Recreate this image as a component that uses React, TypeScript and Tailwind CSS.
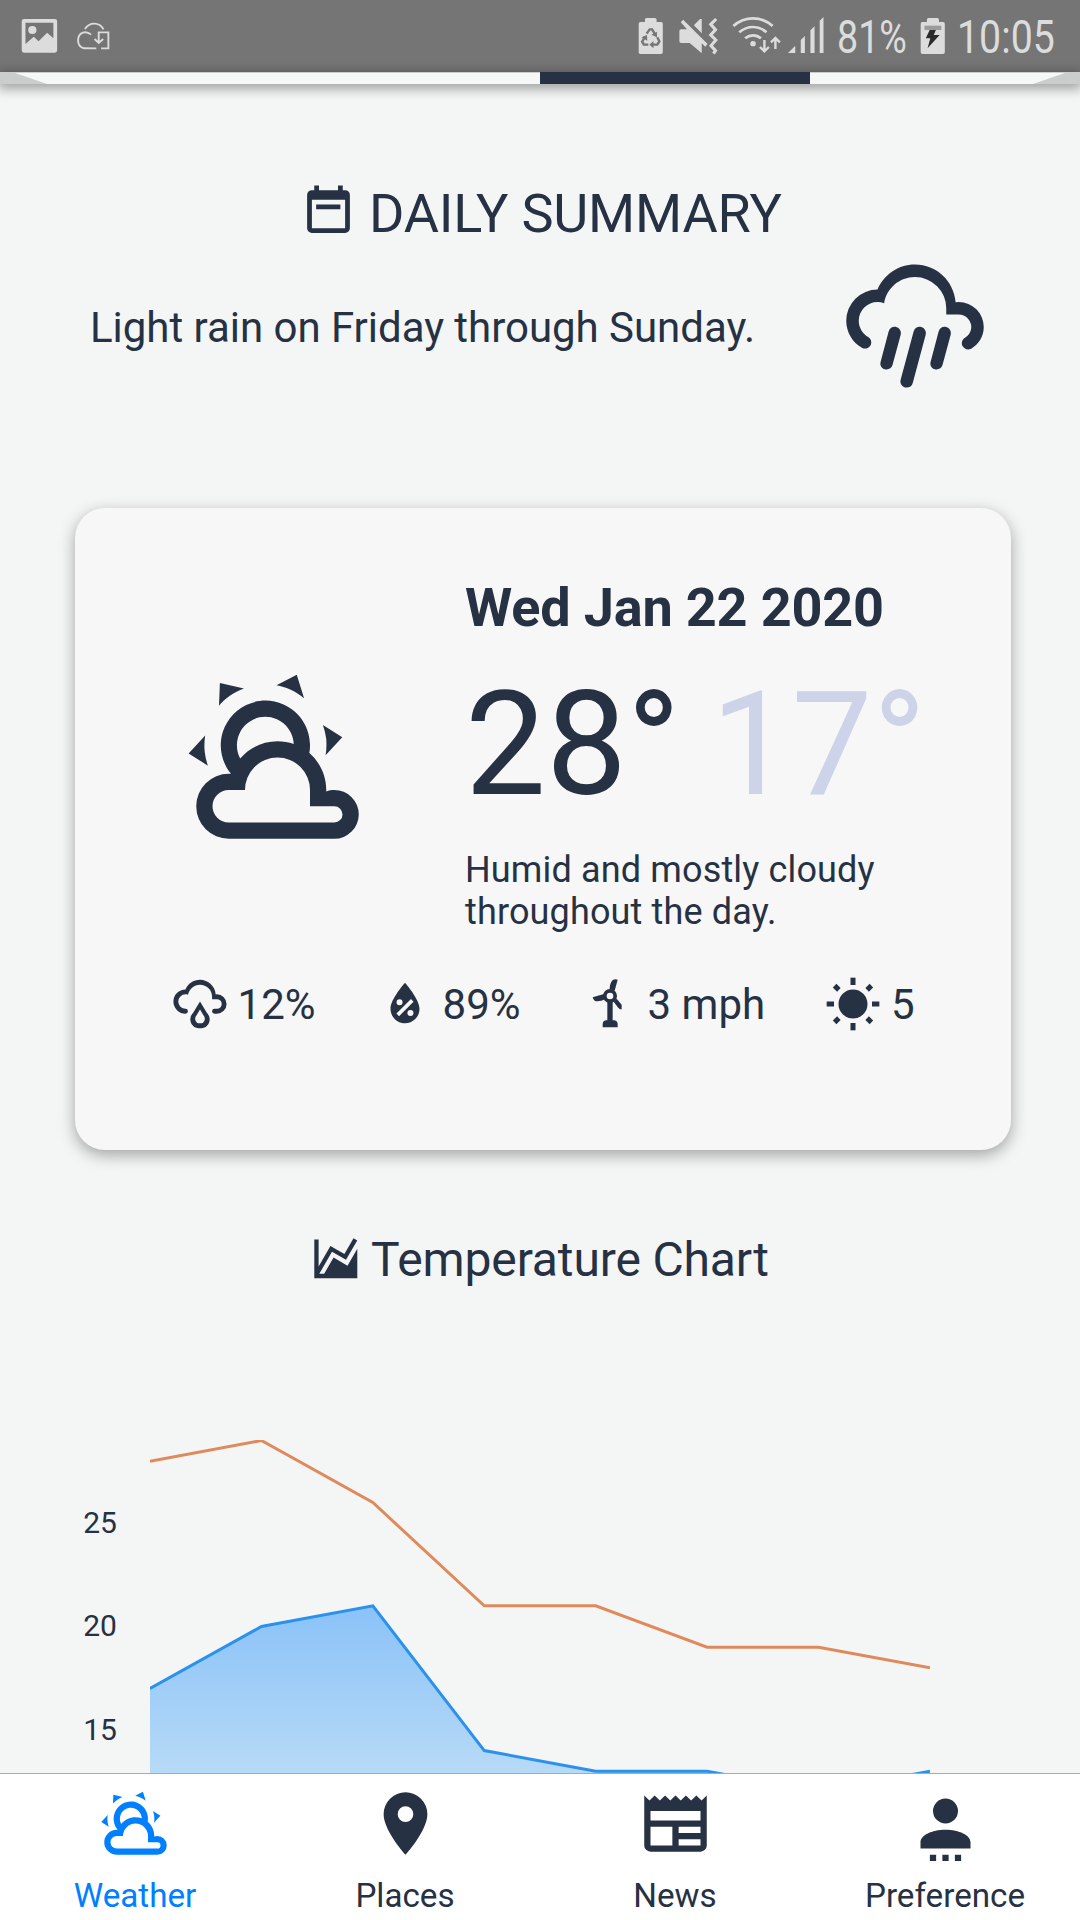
import React from "react";

type IconProps = { d: string; size: string };

function Icon({ d, size }: IconProps) {
  return (
    <svg viewBox="0 0 24 24" className={`${size} shrink-0`} fill="currentColor">
      <path fillRule="evenodd" d={d} />
    </svg>
  );
}

const PARTLY_CLOUDY =
  "M12.74,5.47C15.1,6.5 16.35,9.03 15.92,11.46C17.19,12.56 18,14.19 18,16V16.17C18.31,16.06 18.65,16 19,16A3,3 0 0,1 22,19A3,3 0 0,1 19,22H6A4,4 0 0,1 2,18A4,4 0 0,1 6,14H6.27C5,12.45 4.6,10.24 5.5,8.26C6.72,5.5 9.97,4.24 12.74,5.47M11.93,7.3C10.16,6.5 8.09,7.31 7.31,9.07C6.85,10.09 6.93,11.22 7.41,12.13C8.5,10.83 10.16,10 12,10C12.7,10 13.38,10.12 14,10.34C13.94,9.06 13.18,7.86 11.93,7.3M13.55,3.64C13,3.4 12.45,3.23 11.88,3.12L14.37,1.82L15.27,4.71C14.76,4.29 14.19,3.93 13.55,3.64M6.09,4.44C5.6,4.79 5.17,5.19 4.8,5.63L4.91,2.82L7.87,3.5C7.25,3.71 6.65,4.03 6.09,4.44M18,9.71C17.91,9.12 17.78,8.55 17.59,8L19.97,9.5L17.92,11.73C18.03,11.08 18.05,10.4 18,9.71M3.04,11.3C3.11,11.9 3.24,12.47 3.43,13L1.06,11.5L3.1,9.28C3,9.93 2.97,10.61 3.04,11.3M19,18H16V16A4,4 0 0,0 12,12A4,4 0 0,0 8,16H6A2,2 0 0,0 4,18A2,2 0 0,0 6,20H19A1,1 0 0,0 20,19A1,1 0 0,0 19,18Z";
const POURING =
  "M9,12C9.53,12.14 9.85,12.69 9.71,13.22L8.41,18.05C8.27,18.59 7.72,18.9 7.19,18.76C6.65,18.62 6.34,18.07 6.5,17.54L7.78,12.71C7.92,12.17 8.47,11.86 9,12M13,12C13.53,12.14 13.85,12.69 13.71,13.22L11.64,20.95C11.5,21.5 10.95,21.8 10.41,21.66C9.88,21.5 9.56,20.97 9.7,20.43L11.78,12.71C11.92,12.17 12.47,11.86 13,12M17,12C17.53,12.14 17.85,12.69 17.71,13.22L16.41,18.05C16.27,18.59 15.72,18.9 15.19,18.76C14.65,18.62 14.34,18.07 14.5,17.54L15.78,12.71C15.92,12.17 16.47,11.86 17,12M17,10V9A5,5 0 0,0 12,4C9.5,4 7.45,5.82 7.06,8.19C6.73,8.07 6.37,8 6,8A3,3 0 0,0 3,11C3,12.11 3.6,13.08 4.5,13.6V13.59C5,13.87 5.14,14.5 4.87,14.96C4.59,15.43 4,15.6 3.5,15.32V15.33C2,14.47 1,12.85 1,11A5,5 0 0,1 6,6C7,3.65 9.3,2 12,2C15.43,2 18.24,4.66 18.5,8.03L19,8A4,4 0 0,1 23,12C23,13.5 22.2,14.77 21,15.46V15.46C20.5,15.73 19.91,15.57 19.63,15.09C19.36,14.61 19.5,14 20,13.72V13.72C20.6,13.37 21,12.73 21,12A2,2 0 0,0 19,10H17Z";
const RAINY =
  "M6,14A1,1 0 0,1 7,15A1,1 0 0,1 6,16A5,5 0 0,1 1,11A5,5 0 0,1 6,6C7,3.65 9.3,2 12,2C15.43,2 18.24,4.66 18.5,8.03L19,8A4,4 0 0,1 23,12A4,4 0 0,1 19,16H18A1,1 0 0,1 17,15A1,1 0 0,1 18,14H19A2,2 0 0,0 21,12A2,2 0 0,0 19,10H17V9A5,5 0 0,0 12,4C9.5,4 7.45,5.82 7.06,8.19C6.73,8.07 6.37,8 6,8A3,3 0 0,0 3,11A3,3 0 0,0 6,14M14.83,15.67C16.39,17.23 16.39,19.5 14.83,21.08C14.05,21.86 13,22 12,22C11,22 9.95,21.86 9.17,21.08C7.61,19.5 7.61,17.23 9.17,15.67L12,11L14.83,15.67M13.41,16.69L12,14.25L10.59,16.69C9.8,17.5 9.8,18.7 10.59,19.5C11,19.93 11.5,20 12,20C12.5,20 13,19.93 13.41,19.5C14.2,18.7 14.2,17.5 13.41,16.69Z";
const HUMIDITY =
  "M12,3.25C12,3.25 6,10 6,14C6,17.32 8.69,20 12,20A6,6 0 0,0 18,14C18,10 12,3.25 12,3.25M14.47,9.97L15.53,11.03L9.53,17.03L8.47,15.97M9.75,10A1.25,1.25 0 0,1 11,11.25A1.25,1.25 0 0,1 9.75,12.5A1.25,1.25 0 0,1 8.5,11.25A1.25,1.25 0 0,1 9.75,10M14.25,14.5A1.25,1.25 0 0,1 15.5,15.75A1.25,1.25 0 0,1 14.25,17A1.25,1.25 0 0,1 13,15.75A1.25,1.25 0 0,1 14.25,14.5Z";
const CALENDAR =
  "M6,1H8V3H16V1H18V3H19A2,2 0 0,1 21,5V19A2,2 0 0,1 19,21H5A2,2 0 0,1 3,19V5A2,2 0 0,1 5,3H6ZM5,7V19H19V7ZM6.8,9H17V11H6.8Z";
const AREA_CHART =
  "M17.45,15.18L22,7.31V21H2V3H4V15.54L9.5,6L16,9.78L20.24,2.45L21.97,3.45L16.74,12.5L10.23,8.75L4.31,19H6.57L10.96,11.44L17.45,15.18Z";
const MARKER =
  "M12,11.5A2.5,2.5 0 0,1 9.5,9A2.5,2.5 0 0,1 12,6.5A2.5,2.5 0 0,1 14.5,9A2.5,2.5 0 0,1 12,11.5M12,2A7,7 0 0,0 5,9C5,14.25 12,22 12,22C12,22 19,14.25 19,9A7,7 0 0,0 12,2Z";
const NEWSPAPER =
  "M20,11H4V8H20M20,15H13V13H20M20,19H13V17H20M11,19H4V13H11M20.33,4.67L18.67,3L17,4.67L15.33,3L13.67,4.67L12,3L10.33,4.67L8.67,3L7,4.67L5.33,3L3.67,4.67L2,3V19A2,2 0 0,0 4,21H20A2,2 0 0,0 22,19V3L20.33,4.67Z";
const ACCOUNT =
  "M12,4A4,4 0 0,0 8,8A4,4 0 0,0 12,12A4,4 0 0,0 16,8A4,4 0 0,0 12,4M12,14C7.58,14 4,15.79 4,18V20H20V18C20,15.79 16.42,14 12,14M7,22V24H9V22H7M11,22V24H13V22H11M15,22V24H17V22H15Z";

function WindTurbine() {
  return (
    <svg viewBox="61 44 174 174" className="size-[58px] shrink-0" fill="currentColor">
      <path fillRule="evenodd" d="M148 86a21 21 0 1 0 0 42a21 21 0 1 0 0-42ZM148 97a10 10 0 1 1 0 20a10 10 0 1 1 0-20Z" />
      <path d="M147 87C147 74 151 62 158 58Q165 56 171 58L162 91ZM130 101L96 111Q97 118 103 122C111 125 124 121 133 117ZM168 115L183 133V147L178 147C169 139 164 130 159 124ZM140 125H156V180H161Q171 182 171 192V201H126V192Q126 182 136 180H140Z" />
    </svg>
  );
}

function Sun() {
  return (
    <svg viewBox="793 40 174 174" className="size-[58px] shrink-0" fill="currentColor">
      <circle cx="880" cy="127" r="43.5" />
      {[0, 90, 180, 270].map((a) => (
        <rect key={a} x="872.5" y="48" width="15" height="22" transform={`rotate(${a} 880 127)`} />
      ))}
      {[45, 135, 225, 315].map((a) => (
        <rect key={a} x="872.5" y="49" width="15" height="18" transform={`rotate(${a} 880 127)`} />
      ))}
    </svg>
  );
}

function StatusBar() {
  return (
    <header className="flex h-[72px] shrink-0 items-start bg-[#757575] text-[#dcdcdc]">
      <svg preserveAspectRatio="none" viewBox="60 0 107 216" className="ml-[20.7px] h-[72px] w-[36.85px]" fill="currentColor">
        <path fillRule="evenodd" d="M69 57H158Q165 57 165 64V151Q165 158 158 158H69Q62 158 62 151V64Q62 57 69 57ZM73 68V132L97 110L111 124L136 98L154 115V68ZM93 78a12 12 0 1 1 0 24a12 12 0 1 1 0-24Z" />
      </svg>
      <svg preserveAspectRatio="none" viewBox="220 0 100 216" className="ml-[18.2px] h-[72px] w-[34.44px]" fill="none" stroke="currentColor" strokeWidth="5.5">
        <path d="M246 87Q256 71 273 71Q291 71 300 88M264 104Q252 94 240 98Q226 104 226 121Q226 138 240 144Q245 145 279 145M293 145H314V97H286V128M274 117L286 129L299 117" />
      </svg>
      <div className="grow" />
      <svg preserveAspectRatio="none" viewBox="285 0 75 216" className="h-[72px] w-[25.83px]">
        <path fill="currentColor" d="M305 59Q305 54 310 54H334Q339 54 339 59V66H352Q357 66 357 71V157Q357 162 352 162H292Q287 162 287 157V71Q287 66 292 66H305Z" />
        <g fill="none" stroke="#757575" strokeWidth="7">
          <path d="M310 101L319 88H326L334 102M341 112L347 124L341 134H323M315 134H302L297 125L305 111" />
          <path fill="#757575" stroke="none" d="M324 104L340 95V112ZM330 123V145L318 134ZM295 112L311 105L312 122Z" />
        </g>
      </svg>
      <svg preserveAspectRatio="none" viewBox="400 0 118 216" className="ml-[13.8px] h-[72px] w-[40.63px]" fill="currentColor">
        <path d="M404 93Q404 88 409 88H426L408 67L415 59L486 132L479 140L469 130V160L434 129H409Q404 129 404 124ZM446 76L464 57H469V100Z" />
        <path fill="none" stroke="currentColor" strokeWidth="9" d="M511 57L495 73L509 89L495 105L510 120L496 137L509 152L503 161" />
      </svg>
      <svg preserveAspectRatio="none" viewBox="556 0 146 216" className="ml-[13.1px] h-[72px] w-[50.28px]" fill="none" stroke="currentColor" strokeWidth="8">
        <path d="M563 78Q588 55 620 55Q652 55 677 78M580 97Q598 81 620 81Q642 81 659 97M597 115Q608 106 620 106Q633 106 643 115" />
        <circle cx="620" cy="131" r="8" fill="currentColor" stroke="none" />
        <path strokeWidth="7" d="M653 120V153M640 141L653 154L666 141M685 147V114M672 127L685 114L698 127" />
      </svg>
      <svg preserveAspectRatio="none" viewBox="716 0 108 216" className="ml-[4.8px] h-[72px] w-[37.19px]" fill="currentColor">
        <path d="M719 159L740 137V159ZM756 159V120L768 108V159ZM784 159V91L796 79V159ZM811 159V62L822 51V159Z" />
      </svg>
      <div className="ml-[12.8px] h-[72px] w-[70px] text-[46.5px] leading-[75px]">
        <span className="inline-block origin-left scale-x-[0.81] whitespace-nowrap">81%</span>
      </div>
      <svg preserveAspectRatio="none" viewBox="1104 0 75 216" className="ml-[13.7px] h-[72px] w-[25.83px]">
        <path fill="currentColor" d="M1124 59Q1124 54 1129 54H1154Q1159 54 1159 59V66H1171Q1176 66 1176 71V157Q1176 162 1171 162H1111Q1106 162 1106 157V71Q1106 66 1111 66H1124Z" />
        <path fill="#9b9b9b" d="M1117 77H1166V90H1117Z" />
        <path fill="#2b2b2b" d="M1132 90H1150L1144 105H1161L1126 145L1134 115H1121Z" />
      </svg>
      <div className="ml-[10.9px] mr-[23.1px] h-[72px] w-[100px] text-[46.5px] leading-[75px]">
        <span className="inline-block origin-left scale-x-[0.845] whitespace-nowrap">10:05</span>
      </div>
    </header>
  );
}

function TabStrip() {
  return (
    <div className="relative z-10 flex h-3 shrink-0 border-t border-[#cccccc] bg-[#f5f8f7] shadow-[0_3px_12px_2px_rgba(0,0,0,0.35)]">
      <svg viewBox="0 0 47 11" className="h-[11px] w-[47px]">
        <path fill="#cbcdcc" d="M0 0H15L47 11H0Z" />
      </svg>
      <div className="w-[493px]" />
      <div className="-mt-px h-3 w-[270px] bg-[#263143]" />
      <div className="grow" />
      <svg viewBox="0 0 47 11" className="h-[11px] w-[47px]">
        <path fill="#cbcdcc" d="M47 0H32L0 11H47Z" />
      </svg>
    </div>
  );
}

function DayCard() {
  return (
    <section className="ml-[75px] mt-[107px] h-[642px] w-[936px] shrink-0 rounded-[30px] bg-[#f7f7f7] shadow-[0_5px_16px_rgba(0,0,0,0.34)]">
      <div className="flex h-[430px]">
        <div className="w-[390px] pl-[104.5px] pt-[152.3px]">
          <Icon d={PARTLY_CLOUDY} size="size-[195px]" />
        </div>
        <div className="pt-[68px]">
          <h2 className="text-[54px] font-bold leading-[64px] tracking-[-0.17px]">Wed Jan 22 2020</h2>
          <div className="mt-[21px] whitespace-pre text-[144px] leading-[168px]">
            28°<span className="ml-[30px] text-[#cdd3e8]">17°</span>
          </div>
          <p className="mt-[20px] w-[440px] text-[36px] leading-[42px] tracking-[0.15px]">Humid and mostly cloudy throughout the day.</p>
        </div>
      </div>
      <div className="mt-[36.7px] flex h-[58px] pl-[95.6px] text-[42px] leading-[59px]">
        <div className="flex w-[205px] gap-[9px]">
          <Icon d={RAINY} size="size-[58px]" />
          <span>12%</span>
        </div>
        <div className="flex w-[205px] gap-[9px]">
          <Icon d={HUMIDITY} size="size-[58px]" />
          <span>89%</span>
        </div>
        <div className="flex w-[243.5px] gap-[9px]">
          <WindTurbine />
          <span>3 mph</span>
        </div>
        <div className="flex gap-[9px]">
          <Sun />
          <span>5</span>
        </div>
      </div>
    </section>
  );
}

const HIGHS = [28, 29, 26, 21, 21, 19, 19, 18];
const LOWS = [17, 20, 21, 14, 13, 13, 12, 13];

function points(values: number[]) {
  return values.map((v, i) => `${(i * 780) / 7},${0.5 + (29 - v) * 20.67}`).join(" ");
}

function TemperatureChart() {
  return (
    <div className="mt-[155px] flex">
      <div className="flex w-[150px] flex-col pl-[50px] pt-[31px] text-center text-[30px]">
        {[25, 20, 15].map((t) => (
          <div key={t} className="h-[103.3px] leading-[103.3px]">{t}</div>
        ))}
      </div>
      <svg viewBox="0 0 780 400" className="h-[400px] w-[780px]" strokeWidth="3">
        <defs>
          <linearGradient id="lows" gradientUnits="userSpaceOnUse" x1="0" y1="165" x2="0" y2="400">
            <stop offset="0" stopColor="#8ac2f8" />
            <stop offset="1" stopColor="#c9e3f6" />
          </linearGradient>
        </defs>
        <polygon fill="url(#lows)" points={`0,400 ${points(LOWS)} 780,400`} />
        <polyline fill="none" stroke="#2a91ed" points={points(LOWS)} />
        <polyline fill="none" stroke="#e08a5c" points={points(HIGHS)} />
      </svg>
    </div>
  );
}

const TABS = [
  { label: "Weather", d: PARTLY_CLOUDY, color: "text-[#0080ff]" },
  { label: "Places", d: MARKER, color: "text-[#263143]" },
  { label: "News", d: NEWSPAPER, color: "text-[#263143]" },
  { label: "Preference", d: ACCOUNT, color: "text-[#263143]" },
];

export default function App() {
  return (
    <div className="flex h-[1920px] w-[1080px] flex-col overflow-hidden bg-[#f4f6f6] font-['Roboto',sans-serif] text-[#263143]">
      <StatusBar />
      <TabStrip />
      <main className="flex min-h-0 grow flex-col overflow-hidden">
        <div className="ml-[300px] mt-[99px] flex h-[61px] shrink-0 gap-[12px]">
          <Icon d={CALENDAR} size="size-[57px]" />
          <h1 className="whitespace-nowrap text-[54px] leading-[61px] tracking-[-0.17px]">DAILY SUMMARY</h1>
        </div>
        <div className="ml-[90px] mt-[8px] flex h-[149px] w-[900px] shrink-0 justify-between">
          <p className="whitespace-nowrap text-[42px] leading-[151px] tracking-[-0.03px]">Light rain on Friday through Sunday.</p>
          <Icon d={POURING} size="size-[150px]" />
        </div>
        <DayCard />
        <div className="ml-[310px] mt-[83px] flex h-[52px] shrink-0 gap-[9.5px]">
          <Icon d={AREA_CHART} size="size-[51.6px]" />
          <h2 className="whitespace-nowrap text-[48px] leading-[54px] tracking-[-0.14px]">Temperature Chart</h2>
        </div>
        <TemperatureChart />
      </main>
      <nav className="grid h-[147px] shrink-0 grid-cols-4 border-t border-[#a9abad] bg-white">
        {TABS.map((tab) => (
          <div key={tab.label} className={`flex flex-col items-center pt-[12px] ${tab.color}`}>
            <Icon d={tab.d} size="size-[75px]" />
            <span className="mt-[13px] text-[33.2px] leading-[44px]">{tab.label}</span>
          </div>
        ))}
      </nav>
    </div>
  );
}
